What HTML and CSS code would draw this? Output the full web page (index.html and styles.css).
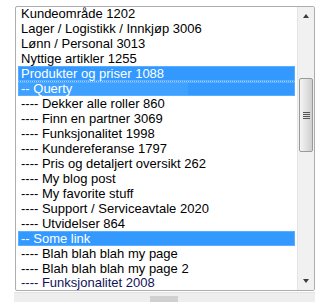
FILE: index.html
```html
<!DOCTYPE html>
<html lang="no">
<head>
    <meta charset="UTF-8">
    <meta name="viewport" content="width=device-width, initial-scale=1.0">
    <title>Sider</title>
    <link rel="stylesheet" href="styles.css">
</head>
<body>
    <div class="page">
        <div class="listbox">
            <ul class="options">
                <li>Kundeområde 1202</li>
                <li>Lager / Logistikk / Innkjøp 3006</li>
                <li>Lønn / Personal 3013</li>
                <li>Nyttige artikler 1255</li>
                <li class="selected">Produkter og priser 1088</li>
                <li class="selected focus">-- Querty</li>
                <li>---- Dekker alle roller 860</li>
                <li>---- Finn en partner 3069</li>
                <li>---- Funksjonalitet 1998</li>
                <li>---- Kundereferanse 1797</li>
                <li>---- Pris og detaljert oversikt 262</li>
                <li>---- My blog post</li>
                <li>---- My favorite stuff</li>
                <li>---- Support / Serviceavtale 2020</li>
                <li>---- Utvidelser 864</li>
                <li class="selected">-- Some link</li>
                <li>---- Blah blah blah my page</li>
                <li>---- Blah blah blah my page 2</li>
                <li class="last">---- Funksjonalitet 2008</li>
            </ul>
            <div class="vscroll">
                <div class="arrow up"></div>
                <div class="track">
                    <div class="thumb">
                        <span class="grip"></span>
                    </div>
                </div>
                <div class="arrow down"></div>
            </div>
        </div>
        <div class="hscroll">
            <div class="hthumb"></div>
        </div>
    </div>
</body>
</html>
```

FILE: styles.css
```css
body {
    margin: 0;
    background-color: #fff;
    font-family: "Liberation Sans", Arial, sans-serif;
    overflow: hidden;
}
.page {
    padding: 6px 0 0 15px;
    width: 300px;
}
/* Listbox */
.listbox {
    display: flex;
    height: 283px;
    border: 1px solid #abadb3;
    border-radius: 2px;
    overflow: hidden;
}
.options {
    flex: 1;
    list-style: none;
    margin: -1px 0 0;
    padding: 0 1px 0 2px;
    overflow: hidden;
}
.options li {
    height: 15px;
    line-height: 15px;
    padding-left: 3px;
    font-size: 13px;
    color: #000;
    white-space: nowrap;
}
.options li.selected {
    background-color: #3399ff;
    color: #fff;
    box-shadow: inset 0 0 0 1px #5aaeff;
}
.options li.focus {
    background-image: linear-gradient(#3ea0ff, #3ea0ff);
    background-size: 170px 100%;
    background-repeat: no-repeat;
    border-top: 1px dotted #a8d2ff;
    line-height: 14px;
    height: 14px;
}
.options li.last {
    color: #12125a;
    line-height: 14px;
}
/* Vertical scrollbar */
.vscroll {
    width: 16px;
    margin-left: 1px;
    display: flex;
    flex-direction: column;
    background-color: #f1f1f1;
    border-left: 1px solid #e4e4e4;
}
.arrow {
    height: 17px;
    position: relative;
}
.arrow::after {
    content: "";
    position: absolute;
    left: 5px;
    border-left: 3px solid transparent;
    border-right: 3px solid transparent;
}
.arrow.up::after {
    top: 7px;
    border-bottom: 4px solid #3c3c3c;
}
.arrow.down::after {
    top: 6px;
    border-top: 4px solid #3c3c3c;
}
.track {
    flex: 1;
    padding-top: 54px;
}
.thumb {
    height: 72px;
    margin: 0 1px;
    border: 1px solid #9a9a9a;
    border-radius: 2px;
    background: linear-gradient(to right, #f4f4f4, #e2e2e2 50%, #cfcfcf);
    display: flex;
    align-items: center;
    justify-content: center;
}
.grip {
    width: 7px;
    height: 7px;
    background: repeating-linear-gradient(#555 0 1px, transparent 1px 2px);
}
/* Horizontal scrollbar */
.hscroll {
    height: 10px;
    margin: 1px 0 0 -1px;
    background-color: #eeeeee;
    border-top: 1px solid #e2e2e2;
    position: relative;
}
.hthumb {
    position: absolute;
    left: 136px;
    top: 3px;
    width: 28px;
    height: 6px;
    background-color: #d0d0d0;
}
```
